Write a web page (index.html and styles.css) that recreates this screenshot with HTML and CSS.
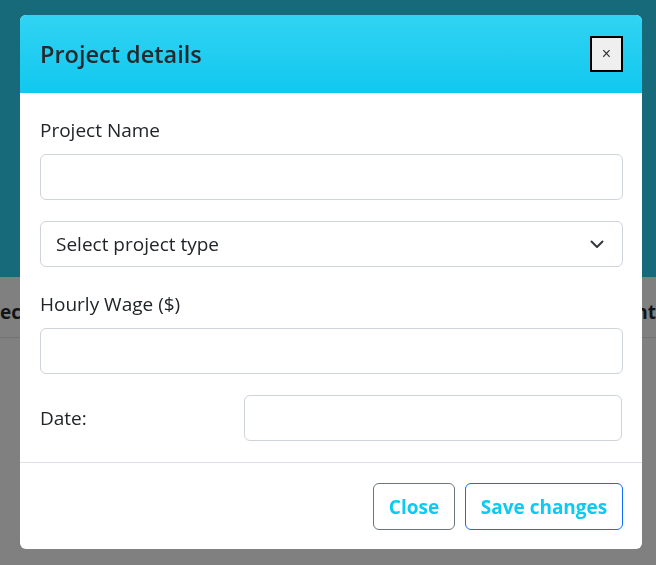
FILE: index.html
```html
<!DOCTYPE html>
<html lang="en">
<head>
<meta charset="utf-8">
<title>Project details</title>
<link rel="stylesheet" href="styles.css">
</head>
<body>
<div class="page">
  <div class="hero"></div>
  <div class="table-head">
    <span>ec</span>
    <span>nt</span>
  </div>
</div>
<div class="overlay">
  <div class="modal">
    <div class="modal-header">
      <h5 class="modal-title">Project details</h5>
      <button class="btn-x" type="button">×</button>
    </div>
    <div class="modal-body">
      <label class="label">Project Name</label>
      <div class="field"></div>
      <div class="field select">
        <span>Select project type</span>
        <svg class="chev" width="14" height="9" viewBox="0 0 14 9"><path d="M1.5 1.5 L7 7 L12.5 1.5" fill="none" stroke="#343a40" stroke-width="2" stroke-linecap="round" stroke-linejoin="round"/></svg>
      </div>
      <label class="label wage">Hourly Wage ($)</label>
      <div class="field"></div>
      <div class="date-row">
        <span class="date-label">Date:</span>
        <div class="field date"></div>
      </div>
    </div>
    <div class="modal-footer">
      <button class="btn btn-close" type="button">Close</button>
      <button class="btn btn-save" type="button">Save changes</button>
    </div>
  </div>
</div>
</body>
</html>
```

FILE: styles.css
```css
* { box-sizing: border-box; }
html, body { margin: 0; padding: 0; }
body {
  font-family: "Open Sans", "Noto Sans", sans-serif;
  background: #808080;
  color: #212529;
  width: 656px;
  height: 565px;
  overflow: hidden;
}
.hero {
  height: 277px;
  background: #176a7a;
}
.table-head {
  display: flex;
  justify-content: space-between;
  font-weight: 700;
  font-size: 19px;
  line-height: 27px;
  color: #121416;
  padding-top: 22px;
  height: 61px;
  border-bottom: 1px solid #737373;
}
.overlay {
  position: fixed;
  top: 0; left: 0; right: 0; bottom: 0;
  padding: 15px 0 0 20px;
}
.modal {
  width: 622px;
  height: 534px;
  background: #fff;
  border-radius: 6px;
  display: flex;
  flex-direction: column;
  overflow: hidden;
}
.modal-header {
  height: 78px;
  flex: none;
  display: flex;
  align-items: center;
  justify-content: space-between;
  padding: 0 19px 0 20px;
  background: linear-gradient(#31d3f3, #11c8ee);
}
.modal-title {
  margin: 0;
  font-size: 23.5px;
  font-weight: 600;
  color: #25292d;
  line-height: 1.2;
}
.btn-x {
  width: 33px;
  height: 36px;
  border: 2px solid #000;
  background: #efefef;
  font-family: "Liberation Sans", Arial, sans-serif;
  font-size: 16px;
  color: #333;
  padding: 0;
  line-height: 1;
}
.modal-body {
  padding: 24px 19px 21px 20px;
  display: flex;
  flex-direction: column;
}
.label {
  font-size: 19px;
  line-height: 27px;
  margin-bottom: 10px;
}
.label.wage { margin-top: 24px; }
.field {
  height: 46px;
  border: 1px solid #ced4da;
  border-radius: 6px;
  background: #fff;
}
.select {
  margin-top: 21px;
  display: flex;
  align-items: center;
  justify-content: space-between;
  padding: 0 18px 0 15px;
  font-size: 19px;
}
.chev { display: block; }
.date-row {
  margin-top: 21px;
  display: grid;
  grid-template-columns: 204px 1fr;
  align-items: center;
}
.date-label { font-size: 19px; line-height: 27px; }
.field.date { margin-right: 1px; }
.modal-footer {
  border-top: 1px solid #dee2e6;
  padding: 20px 19px 19px 20px;
  display: flex;
  justify-content: flex-end;
  gap: 10px;
}
.btn {
  height: 47px;
  background: #fff;
  border-radius: 6px;
  font-family: inherit;
  font-size: 19px;
  font-weight: 700;
  color: #0dcaf0;
  padding: 0;
}
.btn-close { border: 1px solid #6c757d; width: 82px; }
.btn-save { border: 1px solid #0d6efd; width: 158px; }
```
